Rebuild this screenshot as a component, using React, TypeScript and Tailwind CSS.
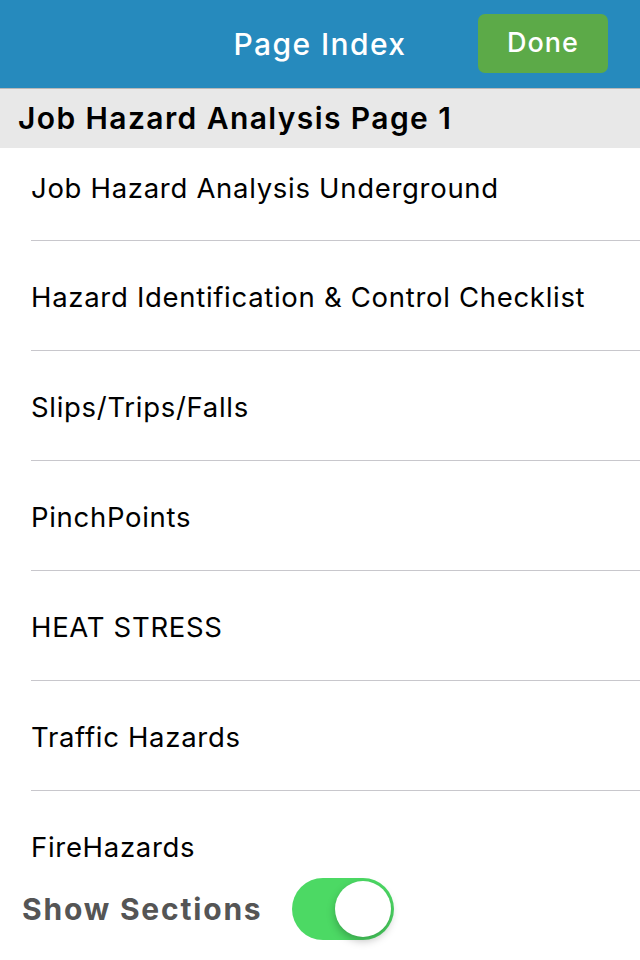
const pages = [
  'Job Hazard Analysis Underground',
  'Hazard Identification & Control Checklist',
  'Slips/Trips/Falls',
  'PinchPoints',
  'HEAT STRESS',
  'Traffic Hazards',
  'FireHazards',
];

const font = { fontFamily: 'Inter, Roboto, "Liberation Sans", sans-serif' };

export default function App() {
  return (
    <div className="relative h-[960px] w-[640px] overflow-hidden bg-white" style={font}>
      <div className="relative flex h-[88px] items-center justify-center bg-[#268abd]">
        <span className="text-[30px] font-medium tracking-[1.4px] text-white">Page Index</span>
        <button className="absolute right-[32px] top-[14px] flex h-[59px] w-[130px] items-center justify-center rounded-[7px] bg-[#5caa48] text-[27px] font-medium tracking-[1px] text-white">
          Done
        </button>
      </div>
      <div className="flex h-[60px] items-center border-t border-[#b8b8b8] bg-[#e8e8e8] px-[18px]">
        <span className="text-[30px] font-semibold tracking-[1.4px] text-black">Job Hazard Analysis Page 1</span>
      </div>
      <ul>
        {pages.map((p, i) => (
          <li
            key={p}
            className={`ml-[31px] flex items-center ${i === pages.length - 1 ? '' : 'border-b border-[#c8c7cc]'} ${i === 0 ? 'h-[93px] pb-[10px]' : 'h-[110px] pt-[4px]'}`}
          >
            <span className="text-[27.5px] tracking-[0.7px] text-black">{p}</span>
          </li>
        ))}
      </ul>
      <div className="absolute bottom-[20px] left-[22px] flex items-center">
        <span className="w-[270px] text-[30px] font-bold tracking-[1.8px] text-[#555555]">Show Sections</span>
        <div className="relative h-[62px] w-[102px] rounded-full bg-[#4cd964]">
          <div className="absolute right-[3px] top-[3px] h-[56px] w-[56px] rounded-full bg-white shadow-[0_4px_8px_rgba(0,0,0,0.25)]" />
        </div>
      </div>
    </div>
  );
}
